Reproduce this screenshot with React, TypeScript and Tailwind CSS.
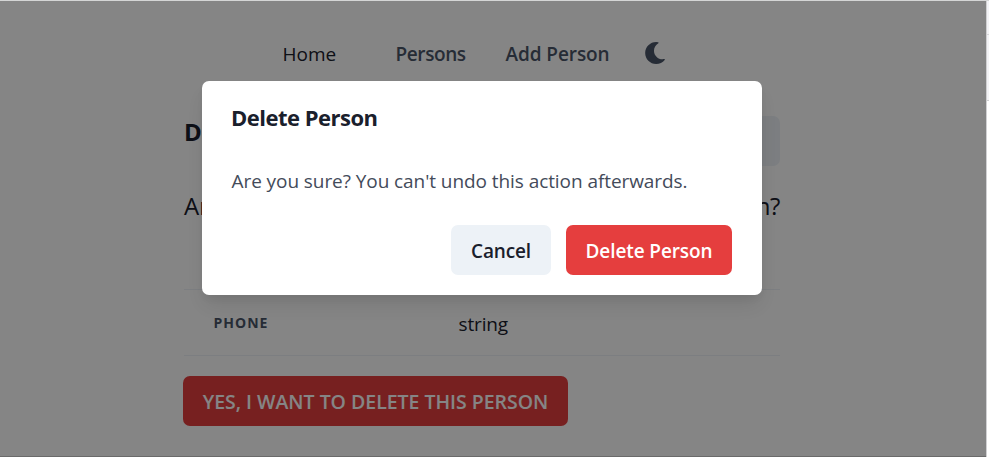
import React from "react";
import { FaMoon } from "react-icons/fa";

function Nav() {
  return (
    <nav className="flex h-[106px] items-center pl-[282.5px] text-[19px] leading-[30px]">
      <a className="w-[113px] text-[#1a202c]">Home</a>
      <a className="w-[110px] font-semibold tracking-[-0.4px] text-[#4a5568]">Persons</a>
      <a className="w-[138px] font-semibold tracking-[-0.08px] text-[#4a5568]">Add Person</a>
      <FaMoon className="mb-[3px] size-[22px] text-[#4a5568]" />
    </nav>
  );
}

function PersonPage() {
  return (
    <main className="mx-[184px] w-[596px] text-[#1a202c]">
      <div className="mt-[9px] flex h-[50px] items-start justify-between">
        <h1 className="text-[24px] leading-[31px] font-bold">Delete Person</h1>
        <button className="h-[50px] w-[100px] rounded-[7px] bg-[#edf2f7] text-[19px] font-semibold">
          Back
        </button>
      </div>
      <p className="mt-[21px] flex h-[38px] justify-between text-[24px] leading-[38px]">
        <span>Are you sure you want to</span>
        <span className="tracking-[-0.4px]">delete this person?</span>
      </p>
      <div className="mt-[64px] flex h-[67px] items-center border-y border-[#edf2f7]">
        <div className="w-[274.5px] pb-px pl-[29.5px] text-[14px] font-bold tracking-[1px] text-[#4a5568]">
          PHONE
        </div>
        <div className="pt-[4px] text-[19px] tracking-[-0.15px]">string</div>
      </div>
      <button className="mt-[20px] ml-[-1px] flex h-[50px] w-[385px] items-center justify-center rounded-[7px] bg-[#e53e3e] pt-[2px] text-[19.5px] font-semibold tracking-[-0.02px] whitespace-nowrap text-white">
        YES, I WANT TO DELETE THIS PERSON
      </button>
    </main>
  );
}

function DeleteDialog() {
  return (
    <section
      role="dialog"
      className="absolute top-[80px] left-[202px] flex h-[214px] w-[560px] flex-col rounded-[7px] bg-white px-[30px] shadow-[0_12px_19px_-4px_rgba(0,0,0,0.1),0_5px_8px_-2px_rgba(0,0,0,0.05)]"
    >
      <header className="-ml-px pt-[19px] text-[22px] leading-[34px] font-bold tracking-[-0.5px] text-[#1a202c]">
        Delete Person
      </header>
      <p className="mt-[32px] -ml-[0.5px] text-[19px] leading-[30px] tracking-[-0.07px] whitespace-nowrap text-[#444b5a]">
        Are you sure? You can't undo this action afterwards.
      </p>
      <footer className="mt-[29px] flex justify-end gap-[15px] text-[19px] font-semibold">
        <button className="h-[50px] w-[100px] rounded-[7px] bg-[#edf2f7] pt-[2px] tracking-[-0.15px] text-[#1a202c]">
          Cancel
        </button>
        <button className="h-[50px] w-[166px] rounded-[7px] bg-[#e53e3e] pt-[2px] tracking-[-0.1px] whitespace-nowrap text-white">
          Delete Person
        </button>
      </footer>
    </section>
  );
}

export default function App() {
  return (
    <div className="flex h-[457px] w-[989px] flex-col overflow-hidden border-t border-[#d4d5d5] bg-white font-['Open_Sans','Noto_Sans',sans-serif]">
      <div className="flex flex-1">
        <div className="relative h-[456px] w-[986px] overflow-hidden bg-white">
          <Nav />
          <PersonPage />
          <div className="absolute inset-0 border-b border-black/20 bg-black/48" />
          <DeleteDialog />
        </div>
        <aside className="w-[3px] border-l border-[#d0d0d2] bg-white">
          <div className="h-[34px] border-b border-[#d9d9dc] bg-[#f3f3f6]" />
          <div className="h-[66px] border-b border-[#d0d0d2] bg-[#f3f3f6]" />
        </aside>
      </div>
    </div>
  );
}
